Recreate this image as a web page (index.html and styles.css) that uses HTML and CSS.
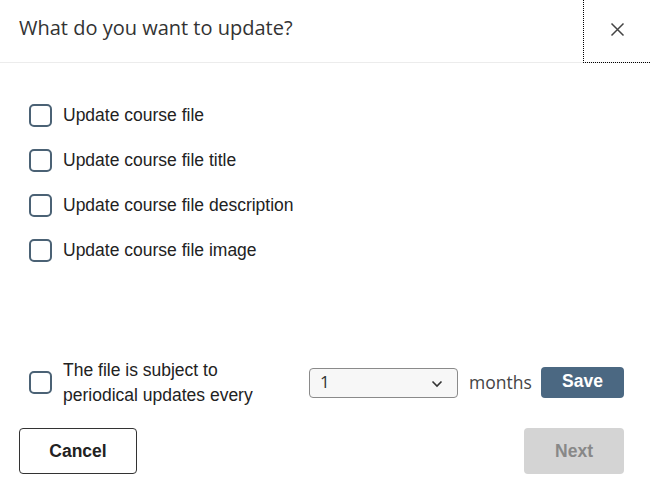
FILE: index.html
```html
<!DOCTYPE html>
<html lang="en">
<head>
    <meta charset="UTF-8">
    <meta name="viewport" content="width=device-width, initial-scale=1.0">
    <title>Update course file</title>
    <link rel="stylesheet" href="styles.css">
</head>
<body>
    <div class="dialog">
        <div class="dialog-header">
            <div class="dialog-title">What do you want to update?</div>
            <button class="close-btn" aria-label="Close">
                <svg width="15" height="15" viewBox="0 0 15 15">
                    <path d="M1.5 1.5 L13.5 13.5 M13.5 1.5 L1.5 13.5" stroke="#444" stroke-width="1.5" fill="none"/>
                </svg>
            </button>
        </div>
        <div class="dialog-body">
            <div class="option-list">
                <label class="option"><input type="checkbox" class="check"> <span>Update course file</span></label>
                <label class="option"><input type="checkbox" class="check"> <span>Update course file title</span></label>
                <label class="option"><input type="checkbox" class="check"> <span>Update course file description</span></label>
                <label class="option"><input type="checkbox" class="check"> <span>Update course file image</span></label>
            </div>
            <div class="periodic">
                <label class="option periodic-option">
                    <input type="checkbox" class="check">
                    <span>The file is subject to<br>periodical updates every</span>
                </label>
                <div class="select-wrap">
                    <select class="months-select">
                        <option>1</option>
                        <option>3</option>
                        <option>6</option>
                        <option>12</option>
                    </select>
                    <svg class="chevron" width="12" height="8" viewBox="0 0 12 8">
                        <path d="M1.5 1.5 L6 6 L10.5 1.5" stroke="#333" stroke-width="1.6" fill="none"/>
                    </svg>
                </div>
                <span class="months-label">months</span>
                <button class="btn btn-save">Save</button>
            </div>
        </div>
        <div class="dialog-footer">
            <button class="btn btn-cancel">Cancel</button>
            <button class="btn btn-next" disabled>Next</button>
        </div>
    </div>
</body>
</html>
```

FILE: styles.css
```css
body {
    margin: 0;
    background-color: #ffffff;
    font-family: "Liberation Sans", Arial, sans-serif;
    color: #222;
}
.dialog {
    width: 650px;
}
.dialog-header {
    display: flex;
    justify-content: space-between;
    height: 62px;
    border-bottom: 1px solid #ececec;
}
.dialog-title {
    align-self: center;
    padding-left: 19px;
    font-family: "Open Sans", sans-serif;
    font-size: 20px;
    color: #333;
    margin-top: -7px;
}
.close-btn {
    width: 67px;
    height: 64px;
    margin-top: -1px;
    margin-bottom: -1px;
    padding: 0 0 2px 1px;
    background: none;
    border: none;
    border-left: 1px dotted #000;
    border-bottom: 1px dotted #000;
    display: flex;
    align-items: center;
    justify-content: center;
    cursor: pointer;
}
.dialog-body {
    padding: 30px 26px 0 29px;
}
.option {
    display: flex;
    align-items: center;
    gap: 11px;
    height: 45px;
    font-size: 17.5px;
    cursor: pointer;
}
.check {
    appearance: none;
    -webkit-appearance: none;
    margin: 0;
    width: 23px;
    height: 23px;
    border: 2px solid #4b6275;
    border-radius: 5px;
    background: #fff;
    flex-shrink: 0;
    cursor: pointer;
}
.periodic {
    display: flex;
    align-items: center;
    margin-top: 84px;
    height: 50px;
}
.periodic-option {
    height: auto;
    line-height: 25px;
    width: 280px;
}
.periodic-option span {
    padding-top: 2px;
}
.select-wrap {
    position: relative;
    margin-top: 1px;
}
.months-select {
    appearance: none;
    -webkit-appearance: none;
    width: 149px;
    height: 30px;
    padding: 0 0 2px 10px;
    border: 1px solid #8a8a8a;
    border-radius: 4px;
    background-color: #f7f7f7;
    font-family: "Open Sans", sans-serif;
    font-size: 17px;
    color: #333;
    display: block;
}
.chevron {
    position: absolute;
    right: 15px;
    top: 12px;
    pointer-events: none;
}
.months-label {
    margin-left: 11px;
    font-family: "Open Sans", sans-serif;
    font-size: 17.5px;
    color: #444;
}
.btn {
    font-family: "Liberation Sans", Arial, sans-serif;
    font-weight: bold;
    font-size: 17.5px;
    border-radius: 4px;
    cursor: pointer;
}
.btn-save {
    margin-left: auto;
    width: 83px;
    height: 31px;
    padding: 0 0 2px 0;
    border: none;
    background-color: #4b6882;
    color: #fff;
}
.dialog-footer {
    display: flex;
    justify-content: space-between;
    padding: 21px 26px 0 19px;
}
.btn-cancel {
    width: 118px;
    height: 46px;
    border: 1px solid #333;
    background: #fff;
    color: #222;
}
.btn-next {
    width: 100px;
    height: 46px;
    border: none;
    background-color: #d4d4d4;
    color: #888;
    cursor: default;
}
```
